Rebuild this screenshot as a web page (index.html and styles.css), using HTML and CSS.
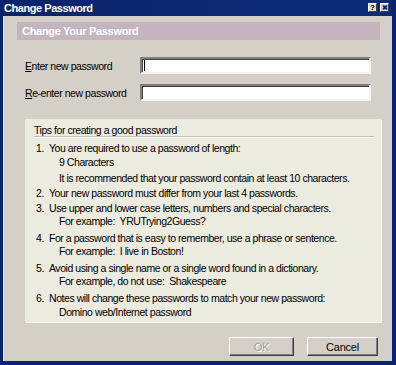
FILE: index.html
```html
<!DOCTYPE html>
<html>
<head>
<meta charset="utf-8">
<title>Change Password</title>
<link rel="stylesheet" href="styles.css">
</head>
<body>
<div class="window">
  <div class="titlebar">
    <span class="title">Change Password</span>
    <div class="tbuttons">
      <span class="tbtn tq">?</span>
      <span class="tbtn tx">&#x2716;</span>
    </div>
  </div>
  <div class="client">
    <div class="band">Change Your Password</div>
    <div class="fields">
      <div class="field">
        <label class="lbl"><u>E</u>nter new password</label>
        <div class="input"><span class="caret"></span></div>
      </div>
      <div class="field">
        <label class="lbl"><u>R</u>e-enter new password</label>
        <div class="input"></div>
      </div>
    </div>
    <div class="tips">
      <div class="tips-title">Tips for creating a good password</div>
      <div class="sep"></div>
      <div class="tip">
        <div class="line"><span class="num">1.</span>You are required to use a password of length:</div>
        <div class="sub s1">9 Characters</div>
        <div class="sub s3">It is recommended that your password contain at least 10 characters.</div>
      </div>
      <div class="tip t2">
        <div class="line"><span class="num">2.</span>Your new password must differ from your last 4 passwords.</div>
      </div>
      <div class="tip t2">
        <div class="line"><span class="num">3.</span>Use upper and lower case letters, numbers and special characters.</div>
        <div class="sub">For example:&nbsp; YRUTrying2Guess?</div>
      </div>
      <div class="tip t4">
        <div class="line"><span class="num">4.</span>For a password that is easy to remember, use a phrase or sentence.</div>
        <div class="sub">For example:&nbsp; I live in Boston!</div>
      </div>
      <div class="tip t4">
        <div class="line"><span class="num">5.</span>Avoid using a single name or a single word found in a dictionary.</div>
        <div class="sub">For example, do not use:&nbsp; Shakespeare</div>
      </div>
      <div class="tip t4">
        <div class="line"><span class="num">6.</span>Notes will change these passwords to match your new password:</div>
        <div class="sub s1">Domino web/Internet password</div>
      </div>
    </div>
    <div class="buttons">
      <button class="btn ok" disabled>OK</button>
      <button class="btn cancel">Cancel</button>
    </div>
  </div>
</div>
</body>
</html>
```
FILE: styles.css
```css
html, body {
  margin: 0;
  padding: 0;
  background: #0b2470;
}
body {
  font-family: "Liberation Sans", Arial, sans-serif;
  font-size: 10.5px;
  letter-spacing: -0.45px;
  color: #000;
}
.window {
  width: 396px;
  height: 365px;
  box-sizing: border-box;
  background: #0b2470;
  padding: 0 4px 4px 3px;
  display: flex;
  flex-direction: column;
  overflow: hidden;
}
.titlebar {
  height: 16px;
  flex: none;
  display: flex;
  align-items: center;
  justify-content: space-between;
  background: linear-gradient(to right, #0a246a, #0c2a76);
}
.title {
  color: #fff;
  font-weight: bold;
  font-size: 11px;
  letter-spacing: -0.45px;
  padding-left: 1px;
  margin-top: -1px;
}
.tbuttons {
  display: flex;
  gap: 3px;
  padding-right: 3px;
  margin-top: -1px;
}
.tbtn {
  width: 9px;
  height: 9px;
  box-sizing: border-box;
  background: #d4d0c8;
  border: 1px solid;
  border-color: #fff #404040 #404040 #fff;
  display: flex;
  align-items: center;
  justify-content: center;
  font-size: 8px;
  line-height: 7px;
  letter-spacing: 0;
  font-weight: bold;
  color: #000;
  overflow: hidden;
}
.tq {
  background: #e4e0cc;
}
.tx {
  font-size: 7px;
  color: #0b2470;
}
.client {
  flex: 1;
  background: #d4d0c8;
  display: flex;
  flex-direction: column;
  padding: 6px 12px 0 13px;
  border-left: 1px solid #e8e6e0;
  white-space: nowrap;
}
.band {
  height: 18px;
  background: #c3b4bd;
  color: #fff;
  font-weight: bold;
  font-size: 11px;
  letter-spacing: -0.3px;
  line-height: 18px;
  padding-left: 5px;
}
.fields {
  display: flex;
  flex-direction: column;
  gap: 10px;
  margin-top: 17px;
  padding-left: 8px;
}
.field {
  display: flex;
  align-items: center;
  height: 17px;
}
.lbl {
  width: 115px;
  flex: none;
}
.input {
  flex: 1;
  height: 17px;
  box-sizing: border-box;
  background: #fff;
  border: 2px solid;
  border-color: #808080 #f4f3ee #f4f3ee #808080;
  box-shadow: inset 1px 1px 0 #404040;
  margin-right: 9px;
  display: flex;
  align-items: center;
}
.caret {
  width: 1px;
  height: 11px;
  background: #000;
  margin-left: 2px;
}
.tips {
  margin-top: 18px;
  margin-left: 8px;
  margin-right: -1px;
  background: #ecebe0;
  padding: 5px 7px 3px 9px;
  line-height: 13px;
  box-shadow: 1px 1px 0 #f6f5ef;
}
.tips-title {
  height: 13px;
}
.sep {
  height: 1px;
  background: #c4c2b8;
  border-bottom: 1px solid #fbfbf7;
  margin: -1px 0 4px 0;
}
.line {
  display: flex;
  padding-left: 2px;
}
.num {
  width: 13px;
  flex: none;
}
.sub {
  padding-left: 25px;
}
.s1 { margin-top: 1px; }
.s3 { margin-top: 3px; }
.t2 { margin-top: 2px; }
.t4 { margin-top: 4px; }
.buttons {
  display: flex;
  justify-content: flex-end;
  gap: 13px;
  margin-top: 15px;
  margin-right: 2px;
}
.btn {
  height: 19px;
  box-sizing: border-box;
  font-family: "Liberation Sans", Arial, sans-serif;
  font-size: 11px;
  letter-spacing: -0.2px;
  background: #d4d0c8;
  border: 1px solid;
  border-color: #fff #404040 #404040 #fff;
  box-shadow: inset -1px -1px 0 #808080;
  padding: 0;
  color: #000;
}
.ok {
  width: 65px;
  color: #a09d96;
  text-shadow: 1px 1px 0 #fff;
}
.cancel {
  width: 71px;
}
```
